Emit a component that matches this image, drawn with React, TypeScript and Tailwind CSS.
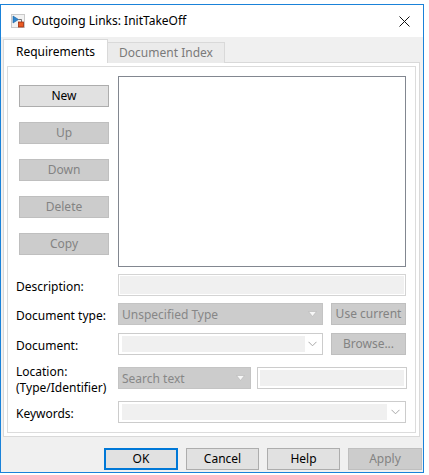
import React from "react";

const font = "font-['Noto_Sans','Liberation_Sans',sans-serif]";

function Btn({ label, disabled, primary, className = "" }: { label: string; disabled?: boolean; primary?: boolean; className?: string }) {
  const base = "h-[22px] flex items-center justify-center text-[12px] leading-none";
  const look = disabled
    ? "bg-[#cccccc] border border-[#bfbfbf] text-[#838383]"
    : primary
    ? "bg-[#e1e1e1] border-2 border-[#0078d7] text-black"
    : "bg-[#e1e1e1] border border-[#adadad] text-black";
  return <div className={`${base} ${look} ${className}`}>{label}</div>;
}

function Tri() {
  return (
    <svg width="9" height="6" viewBox="0 0 9 6">
      <polygon points="0.5,0.5 8.5,0.5 4.5,5.5" fill="#f7f7f7" stroke="#b5b5b5" strokeWidth="0.6" />
    </svg>
  );
}

function Chev() {
  return (
    <svg width="9" height="6" viewBox="0 0 9 6">
      <polyline points="0.5,0.8 4.5,4.8 8.5,0.8" fill="none" stroke="#a8a8a8" strokeWidth="1" />
    </svg>
  );
}

function Label({ children, pad = true }: { children: React.ReactNode; pad?: boolean }) {
  return (
    <div className={`w-[102px] text-[12px] leading-[16px] text-black whitespace-nowrap ${pad ? "pt-[3px]" : "pt-[1px]"}`}>
      {children}
    </div>
  );
}

export default function App() {
  return (
    <div className={`w-[429px] h-[475px] bg-white pt-[4px] ${font}`}>
      <div className="w-[424px] h-[469px] border border-[#1a82d9] flex flex-col bg-[#f0f0f0]">
        {/* title bar */}
        <div className="h-[32px] bg-white flex items-center pl-[10px] pr-[13px] shrink-0">
          <svg width="14" height="14" viewBox="0 0 14 14" className="mr-[7px]">
            <rect x="0.5" y="0.5" width="13" height="13" fill="#f2f2f2" stroke="#c9c9c9" />
            <polygon points="2,2 2,9 7.5,5.5" fill="#2f86cf" stroke="#1c5f9c" strokeWidth="0.6" />
            <polyline points="7.5,5.5 10.5,5.5 10.5,8" fill="none" stroke="#555" strokeWidth="0.8" />
            <rect x="7.5" y="8" width="5" height="5" fill="#ea5a22" stroke="#9a2c0e" strokeWidth="0.8" />
          </svg>
          <div className="text-[12px] text-black flex-1 leading-none">Outgoing Links: InitTakeOff</div>
          <svg width="11" height="11" viewBox="0 0 11 11">
            <path d="M0.5 0.5 L10.5 10.5 M10.5 0.5 L0.5 10.5" stroke="#111" strokeWidth="1" />
          </svg>
        </div>

        {/* tabs */}
        <div className="pl-[2px] pt-[2px] flex items-end relative z-10 -mb-[1px]">
          <div className="w-[105px] h-[24px] bg-white border border-b-0 border-[#d9d9d9] flex items-center justify-center text-[12px] text-black">
            Requirements
          </div>
          <div className="w-[117px] h-[21px] bg-[#ebebeb] border border-l-0 border-b-0 border-[#d9d9d9] flex items-center justify-center text-[12px] text-[#7a7a7a]">
            Document Index
          </div>
        </div>

        {/* panel */}
        <div className="ml-[2px] w-[417px] h-[375px] bg-white border border-[#d9d9d9] p-[3px]">
          <div className="w-full h-full border border-[#dcdcdc] pl-[8px] pt-[9px]">
            <div className="flex">
              <div className="ml-[3px] mt-[9px] w-[90px] flex flex-col gap-[15px]">
                <Btn label="New" />
                <Btn label="Up" disabled />
                <Btn label="Down" disabled />
                <Btn label="Delete" disabled />
                <Btn label="Copy" disabled />
              </div>
              <div className="ml-[9px] w-[288px] h-[191px] border border-[#828790] bg-white" />
            </div>

            {/* Description */}
            <div className="mt-[7px] flex items-center">
              <Label>Description:</Label>
              <div className="w-[288px] h-[22px] border border-[#d4d4d4] bg-white p-[1px]">
                <div className="w-full h-full bg-[#f0f0f0]" />
              </div>
            </div>

            {/* Document type */}
            <div className="mt-[7px] flex items-center">
              <Label>Document type:</Label>
              <div className="w-[205px] h-[22px] bg-[#cccccc] border border-[#c4c4c4] flex items-center pl-[3px] pr-[5px] text-[12px] text-[#878787]">
                <span className="flex-1 pt-[2px]">Unspecified Type</span>
                <Tri />
              </div>
              <Btn label="Use current" disabled className="ml-[8px] w-[75px]" />
            </div>

            {/* Document */}
            <div className="mt-[8px] flex items-center">
              <Label>Document:</Label>
              <div className="w-[205px] h-[22px] bg-white border border-[#cccccc] flex items-center pl-[3px] py-[2px] pr-[5px]">
                <div className="w-[183px] h-full bg-[#f0f0f0]" />
                <div className="flex-1 flex justify-end">
                  <Chev />
                </div>
              </div>
              <Btn label="Browse..." disabled className="ml-[8px] w-[75px]" />
            </div>

            {/* Location */}
            <div className="mt-[8px] flex items-start">
              <Label pad={false}>
                Location:
                <br />
                (Type/Identifier)
              </Label>
              <div className="mt-[4px] w-[133px] h-[22px] bg-[#cccccc] border border-[#c4c4c4] flex items-center pl-[3px] pr-[5px] text-[12px] text-[#878787]">
                <span className="flex-1 pt-[2px]">Search text</span>
                <Tri />
              </div>
              <div className="mt-[4px] ml-[6px] w-[150px] h-[22px] border border-[#cccccc] bg-white p-[2px]">
                <div className="w-full h-full bg-[#f0f0f0]" />
              </div>
            </div>

            {/* Keywords */}
            <div className="mt-[5px] flex items-center">
              <Label>Keywords:</Label>
              <div className="w-[288px] h-[22px] bg-white border border-[#cccccc] flex items-center pl-[3px] py-[2px] pr-[5px]">
                <div className="w-[265px] h-full bg-[#f0f0f0]" />
                <div className="flex-1 flex justify-end">
                  <Chev />
                </div>
              </div>
            </div>
          </div>
        </div>

        {/* bottom buttons */}
        <div className="mt-[11px] pl-[103px] flex gap-[8px]">
          <Btn label="OK" primary className="w-[74px]" />
          <Btn label="Cancel" className="w-[73px]" />
          <Btn label="Help" className="w-[73px]" />
          <Btn label="Apply" disabled className="w-[74px]" />
        </div>
      </div>
    </div>
  );
}
